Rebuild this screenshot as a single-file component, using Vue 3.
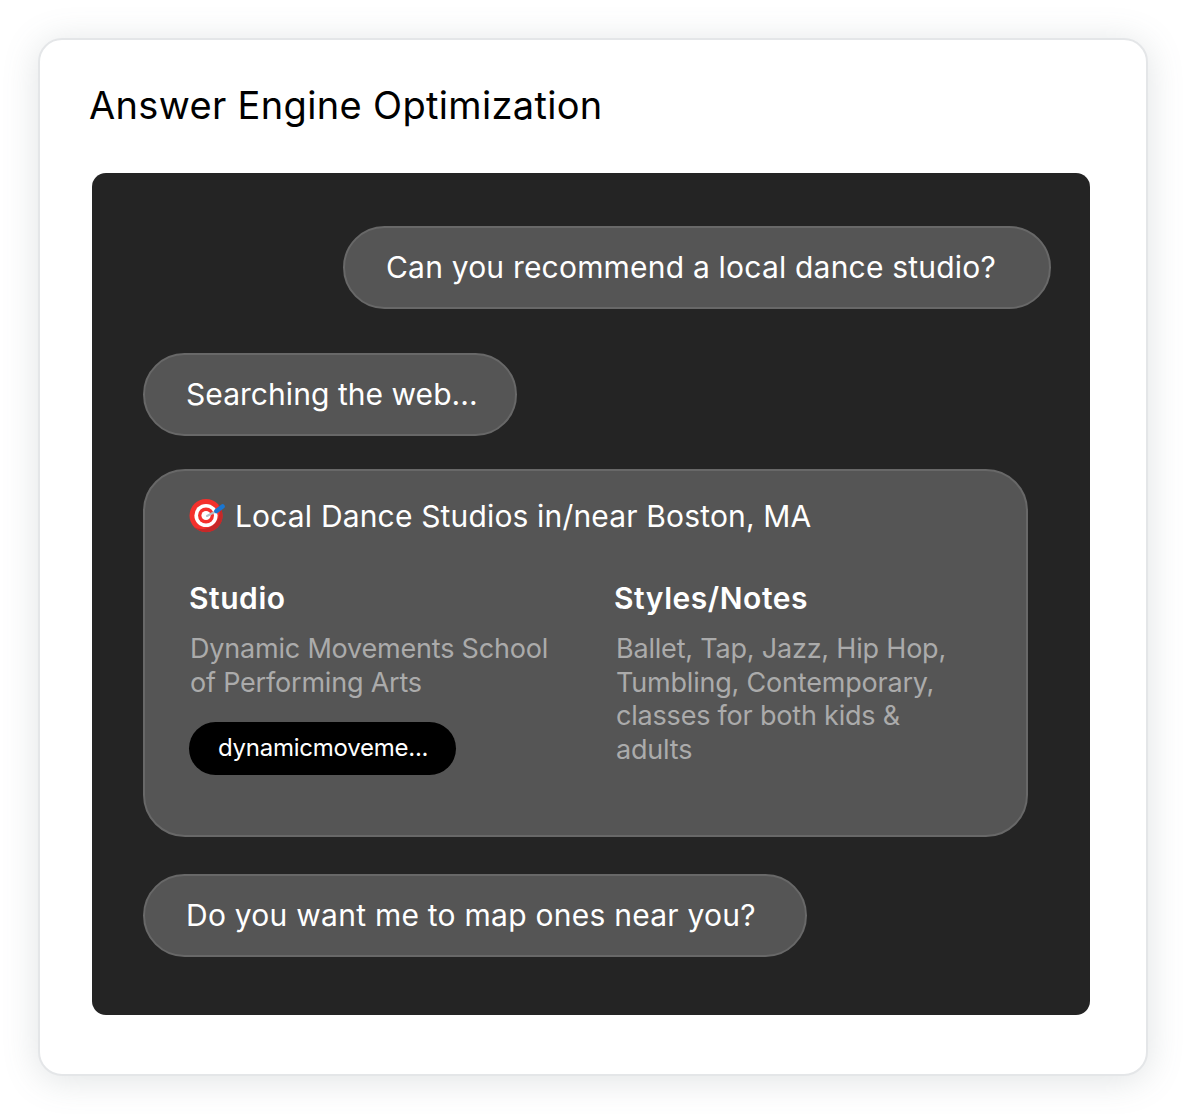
<template>
  <div class="page">
    <section class="card">
      <h1 class="title">Answer Engine Optimization</h1>
      <div class="chat">
        <div class="bubble bubble--user">Can you recommend a local dance studio?</div>
        <div class="bubble bubble--status">Searching the web...</div>
        <div class="answer">
          <div class="answer__head">
            <svg class="target" viewBox="0 0 38 38" aria-hidden="true">
              <circle cx="17" cy="18.5" r="16.5" fill="#f4302c" />
              <path d="M29 7.2A16.5 16.5 0 0 1 5.3 30.2 17.5 17.5 0 0 0 29 7.2z" fill="#c62828" />
              <circle cx="17" cy="18.5" r="11.6" fill="#fff" />
              <circle cx="17" cy="18.5" r="8" fill="#f4302c" />
              <circle cx="17" cy="18.5" r="4.6" fill="#fff" />
              <path d="M18 19 27.5 14" stroke="#b4bec6" stroke-width="2" stroke-linecap="round" />
              <path d="M27.5 14 33.5 9.5" stroke="#1976d2" stroke-width="4.6" stroke-linecap="round" />
            </svg>
            <span>Local Dance Studios in/near Boston, MA</span>
          </div>
          <div class="answer__table">
            <div class="col col--studio">
              <h3>Studio</h3>
              <p>Dynamic Movements School of Performing Arts</p>
              <span class="chip">dynamicmoveme...</span>
            </div>
            <div class="col col--notes">
              <h3>Styles/Notes</h3>
              <p>Ballet, Tap, Jazz, Hip Hop, Tumbling, Contemporary, classes for both kids &amp; adults</p>
            </div>
          </div>
        </div>
        <div class="bubble bubble--follow">Do you want me to map ones near you?</div>
      </div>
    </section>
  </div>
</template>

<script setup>
</script>

<style>
body {
  background: #fff;
}
</style>

<style scoped>
.page {
  width: 1186px;
  height: 1114px;
  padding: 38px;
  box-sizing: border-box;
  font-family: "Inter", "Noto Sans", sans-serif;
}

.card {
  height: 1038px;
  box-sizing: border-box;
  padding: 42px 57px 0 52px;
  background: #fff;
  border: 2px solid #e4e6e8;
  border-radius: 24px;
  box-shadow: 0 4px 36px rgba(100, 115, 120, 0.2);
}

.title {
  margin: 0 0 45px -3px;
  font-size: 38px;
  line-height: 46px;
  font-weight: 400;
  letter-spacing: 0.33px;
  color: #000;
}

.chat {
  height: 842px;
  box-sizing: border-box;
  width: 998px;
  padding: 53px 39px 0 51px;
  background: #242424;
  border-radius: 14px;
  display: flex;
  flex-direction: column;
  align-items: flex-start;
  color: #fff;
}

.bubble {
  height: 83px;
  box-sizing: border-box;
  padding: 0 42px 2px 41px;
  display: flex;
  align-items: center;
  font-size: 30px;
  letter-spacing: 0.2px;
  background: #555;
  border: 2px solid #686868;
  border-radius: 42px;
}

.bubble--user {
  align-self: flex-end;
  padding-right: 53px;
}

.bubble--status {
  margin-top: 44px;
  padding-right: 37px;
  letter-spacing: 0.05px;
}

.bubble--follow {
  margin-top: 37px;
  padding-right: 49px;
  letter-spacing: 0.25px;
}

.answer {
  margin-top: 33px;
  width: 885px;
  height: 368px;
  box-sizing: border-box;
  padding: 25px 44px 0 44px;
  background: #555;
  border: 2px solid #686868;
  border-radius: 42px;
}

.answer__head {
  display: flex;
  align-items: center;
  gap: 8px;
  font-size: 30px;
  line-height: 40px;
  letter-spacing: 0.16px;
}

.target {
  width: 38px;
  height: 38px;
  flex: none;
}

.answer__table {
  margin-top: 42px;
  display: grid;
  grid-template-columns: 425px 1fr;
}

.col h3 {
  margin: 0 0 14px;
  font-size: 30px;
  line-height: 40px;
  font-weight: 600;
  letter-spacing: 0.55px;
}

.col p {
  margin: 0;
  max-width: 370px;
  font-size: 27px;
  line-height: 33.6px;
  letter-spacing: -0.2px;
  color: #ababab;
}

.col--studio p {
  padding-left: 1px;
}

.col--notes p {
  padding-left: 2px;
  max-width: 340px;
}

.chip {
  display: inline-flex;
  align-items: center;
  margin-top: 23px;
  height: 53px;
  padding: 0 28px 2px 29px;
  box-sizing: border-box;
  background: #000;
  border-radius: 27px;
  font-size: 24px;
  letter-spacing: -0.25px;
}
</style>
